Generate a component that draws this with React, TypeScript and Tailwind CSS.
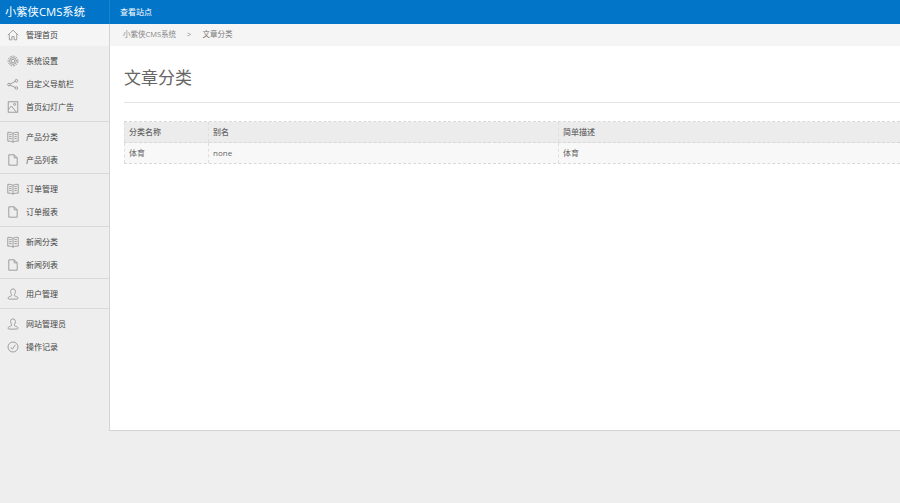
// Admin shell: article category list
import React from 'react';

type IconName = 'home' | 'gear' | 'share' | 'picture' | 'book' | 'file' | 'user' | 'clock';

const Icon: React.FC<{ name: IconName }> = ({ name }) => (
  <svg viewBox="0 0 12 12" fill="none" stroke="#8a8a8a" strokeWidth="0.8" className="w-[12px] h-[12px] shrink-0">
    {name === 'home' && <path d="M0.8 6.2 6 1.2l5.2 5M2.3 5.2v5.6h2.6V7.6h2.2v3.2h2.6V5.2" />}
    {name === 'gear' && (
      <>
        <circle cx="6" cy="6" r="1.8" />
        <circle cx="6" cy="6" r="3.4" />
        <circle cx="6" cy="6" r="4.9" strokeDasharray="1.8 1" />
      </>
    )}
    {name === 'share' && (
      <>
        <circle cx="2" cy="6.6" r="1.3" />
        <circle cx="9.4" cy="2.8" r="1.3" />
        <circle cx="9.4" cy="10" r="1.3" />
        <path d="M3.2 6 8.2 3.4M3.2 7.2 8.2 9.4" />
      </>
    )}
    {name === 'picture' && (
      <>
        <rect x="1.2" y="0.8" width="9.6" height="10.4" />
        <circle cx="7.6" cy="3.4" r="1" />
        <path d="M1.2 8.6 4.4 5l4.8 6" />
      </>
    )}
    {name === 'book' && (
      <path d="M6 2.4C4.6 1.4 2.6 1.2 0.8 1.4v8.8c1.8-.2 3.8 0 5.2 1 1.4-1 3.4-1.2 5.2-1V1.4C9.4 1.2 7.4 1.4 6 2.4zm0 0v8.8M2.2 3.6h2.4M2.2 5.6h2.4M2.2 7.6h2.4M7.4 3.6h2.4M7.4 5.6h2.4M7.4 7.6h2.4" />
    )}
    {name === 'file' && <path d="M1.8 0.8h5.4l3 3v7.4H1.8zM7.2 0.8v3h3" />}
    {name === 'user' && (
      <path d="M6 0.9c-1.5 0-2.4 1-2.4 2.6S4.3 6 4.6 6.8c.2.8-.4 1.2-1.4 1.6-1 .3-2.2.7-2.2 1.7 0 .8.8 1 1.4 1h7.2c.6 0 1.4-.2 1.4-1 0-1-1.2-1.4-2.2-1.7-1-.4-1.6-.8-1.4-1.6.3-.8 1-1.7 1-3.3S7.5.9 6 .9z" />
    )}
    {name === 'clock' && (
      <>
        <circle cx="6" cy="6" r="5" />
        <path d="M3.6 6.4 5.4 8 8.4 3.8" />
      </>
    )}
  </svg>
);

const MENU: { label: string; icon: IconName }[][] = [
  [
    { label: '系统设置', icon: 'gear' },
    { label: '自定义导航栏', icon: 'share' },
    { label: '首页幻灯广告', icon: 'picture' }
  ],
  [
    { label: '产品分类', icon: 'book' },
    { label: '产品列表', icon: 'file' }
  ],
  [
    { label: '订单管理', icon: 'book' },
    { label: '订单报表', icon: 'file' }
  ],
  [
    { label: '新闻分类', icon: 'book' },
    { label: '新闻列表', icon: 'file' }
  ],
  [{ label: '用户管理', icon: 'user' }],
  [
    { label: '网站管理员', icon: 'user' },
    { label: '操作记录', icon: 'clock' }
  ]
];

const MenuItem: React.FC<{ label: string; icon: IconName }> = ({ label, icon }) => (
  <div className="h-[23px] pl-[7px] flex items-center gap-[7px] text-[#444]">
    <Icon name={icon} />
    <span>{label}</span>
  </div>
);

const CELL = 'px-[4px] border-l border-dashed border-[#dedede]';

export default function App() {
  return (
    <div
      className="w-[900px] h-[503px] overflow-hidden bg-[#eeeeee] text-[8px] text-[#666]"
      style={{ fontFamily: '"Open Sans", "Noto Sans CJK SC", sans-serif' }}
    >
      <header className="h-[24px] bg-[#0275c9] flex items-center text-white">
        <div className="w-[110px] h-full pl-[5px] flex items-center text-[11.3px] border-r border-[#1a84d0]">小紫侠CMS系统</div>
        <div className="pl-[10px]">查看站点</div>
      </header>

      <div className="flex h-[407px]">
        <aside className="w-[110px] shrink-0 border-r border-[#d4d4d4]">
          <div className="h-[22px] bg-[#f5f5f5] flex items-center">
            <div className="w-full"><MenuItem label="管理首页" icon="home" /></div>
          </div>
          <div className="pt-[2px]">
            {MENU.map((group, i) => (
              <div key={i} className={i < MENU.length - 1 ? 'pt-[1.5px] pb-[2px] mb-[2px] border-b border-[#d9d9d9]' : 'pt-[1.5px]'}>
                {group.map(item => (
                  <MenuItem key={item.label} {...item} />
                ))}
              </div>
            ))}
          </div>
        </aside>

        <main className="flex-1 min-w-0 bg-white border-b border-[#d4d4d4]">
          <div className="h-[22px] bg-[#f5f5f5] pl-[13px] flex items-center text-[7.5px] text-[#888]">
            <span>小紫侠CMS系统</span>
            <span className="mx-[11px]">&gt;</span>
            <span className="text-[#777]">文章分类</span>
          </div>
          <div className="pl-[14px]">
            <h1 className="h-[57px] border-b border-[#e3e3e3] pt-[19px] text-[17px] leading-[26px] font-normal text-[#666]">文章分类</h1>
            <div className="mt-[18px] border-y border-dashed border-[#d8d8d8] text-[#666]">
              <div className="h-[21px] flex items-center bg-[#ececec] border-b border-dashed border-[#d8d8d8] font-medium">
                <div className={`w-[84px] h-full flex items-center ${CELL}`}>分类名称</div>
                <div className={`w-[350px] h-full flex items-center ${CELL}`}>别名</div>
                <div className={`flex-1 h-full flex items-center ${CELL}`}>简单描述</div>
              </div>
              <div className="h-[20px] flex items-center bg-[#f8f8f8]">
                <div className={`w-[84px] h-full flex items-center ${CELL}`}>体育</div>
                <div className={`w-[350px] h-full flex items-center ${CELL}`}>none</div>
                <div className={`flex-1 h-full flex items-center ${CELL}`}>体育</div>
              </div>
            </div>
          </div>
        </main>
      </div>
    </div>
  );
}
